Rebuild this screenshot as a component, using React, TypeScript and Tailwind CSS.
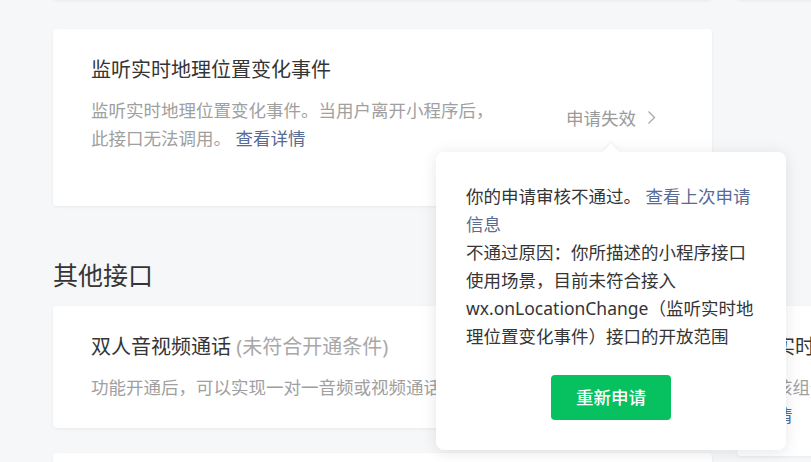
import React from 'react';

const cardClass = 'bg-white rounded-[4px] shadow-[0_1px_3px_rgba(0,0,0,0.06)]';

function Chevron() {
  return (
    <svg width="9" height="15" viewBox="0 0 9 15" fill="none">
      <path d="M1.5 1.5 L7.5 7.5 L1.5 13.5" stroke="#a8a8a8" strokeWidth="1.3" />
    </svg>
  );
}

function FailedPopover() {
  return (
    <div className="absolute z-10 top-[48px] left-1/2 -translate-x-1/2 w-[350px] rounded-[8px] bg-white shadow-[0_2px_16px_rgba(0,0,0,0.1)] px-[30px] pt-[30px] pb-[30px] text-[17.5px] leading-[28px] text-[#353535]">
      <div className="absolute left-1/2 -translate-x-1/2 top-[-6px] w-[12px] h-[12px] rotate-45 bg-white shadow-[-2px_-2px_4px_rgba(0,0,0,0.04)]" />
      <p className="relative">
        你的申请审核不通过。 <a className="text-[#576b95]">查看上次申请信息</a>
      </p>
      <p className="relative">
        不通过原因：你所描述的小程序接口使用场景，目前未符合接入wx.onLocationChange（监听实时地理位置变化事件）接口的开放范围
      </p>
      <button className="block mx-auto mt-[25px] w-[120px] h-[45px] rounded-[4px] bg-[#07c160] text-white text-[17.5px] font-medium">
        重新申请
      </button>
    </div>
  );
}

export default function App() {
  return (
    <div className="w-[811px] h-[462px] overflow-hidden bg-[#f6f7f9] font-['Noto_Sans','Noto_Sans_CJK_SC',sans-serif]">
      <div className="-mt-[150px] pl-[53px]">
        {/* 已开通接口 */}
        <div className="flex items-start gap-[25px]">
          <div className="w-[659px] shrink-0 flex flex-col gap-[29px]">
            <div className={`${cardClass} h-[150px]`} />
            <div className={`${cardClass} flex items-center justify-between pl-[38px] pr-[56px]`}>
              <div className="w-[410px] pt-[28px] pb-[54px]">
                <h3 className="text-[20px] leading-[26px] text-[#353535]">监听实时地理位置变化事件</h3>
                <p className="mt-[13px] text-[17.5px] leading-[28px] text-[#a0a0a0]">
                  监听实时地理位置变化事件。当用户离开小程序后，此接口无法调用。 <a className="text-[#576b95]">查看详情</a>
                </p>
              </div>
              <div className="relative flex items-center gap-[11px]">
                <span className="text-[17.5px] leading-[28px] text-[#9a9a9a]">申请失效</span>
                <Chevron />
                <FailedPopover />
              </div>
            </div>
          </div>
          <div className="w-[659px] shrink-0 flex flex-col gap-[29px]">
            <div className={`${cardClass} h-[150px]`} />
          </div>
        </div>

        <h2 className="mt-[52px] mb-[13px] text-[25px] leading-[35px] text-[#353535]">其他接口</h2>

        <div className="flex items-start gap-[25px]">
          <div className="w-[659px] shrink-0 flex flex-col gap-[25px]">
            <div className={`${cardClass} px-[38px] pt-[28px] pb-[27px]`}>
              <h3 className="text-[20px] leading-[26px] text-[#353535]">
                双人音视频通话 <span className="text-[#a8a8a8]">(未符合开通条件)</span>
              </h3>
              <p className="mt-[13px] text-[17.5px] leading-[28px] text-[#a0a0a0]">
                功能开通后，可以实现一对一音频或视频通话。
              </p>
            </div>
            <div className={`${cardClass} px-[38px] pt-[28px] pb-[27px]`}>
              <h3 className="text-[20px] leading-[26px] text-[#353535]">实时日志</h3>
              <p className="mt-[13px] text-[17.5px] leading-[28px] text-[#a0a0a0]">
                开通后，可以在管理后台查看小程序的实时日志。
              </p>
            </div>
          </div>
          <div className="w-[659px] shrink-0 flex flex-col gap-[25px]">
            <div className={`${cardClass} px-[38px] pt-[28px] pb-[27px]`}>
              <h3 className="text-[20px] leading-[26px] text-[#353535]">实时音视频录制</h3>
              <p className="mt-[13px] text-[17.5px] leading-[28px] text-[#a0a0a0]">
                该组件用于实时音视频的录制与播放，需开通后方可使用。 <a className="text-[#576b95]">查看详</a>
                <br />
                <a className="text-[#576b95]">情</a>
              </p>
            </div>
            <div className={`${cardClass} h-[120px]`} />
          </div>
        </div>
      </div>
    </div>
  );
}
